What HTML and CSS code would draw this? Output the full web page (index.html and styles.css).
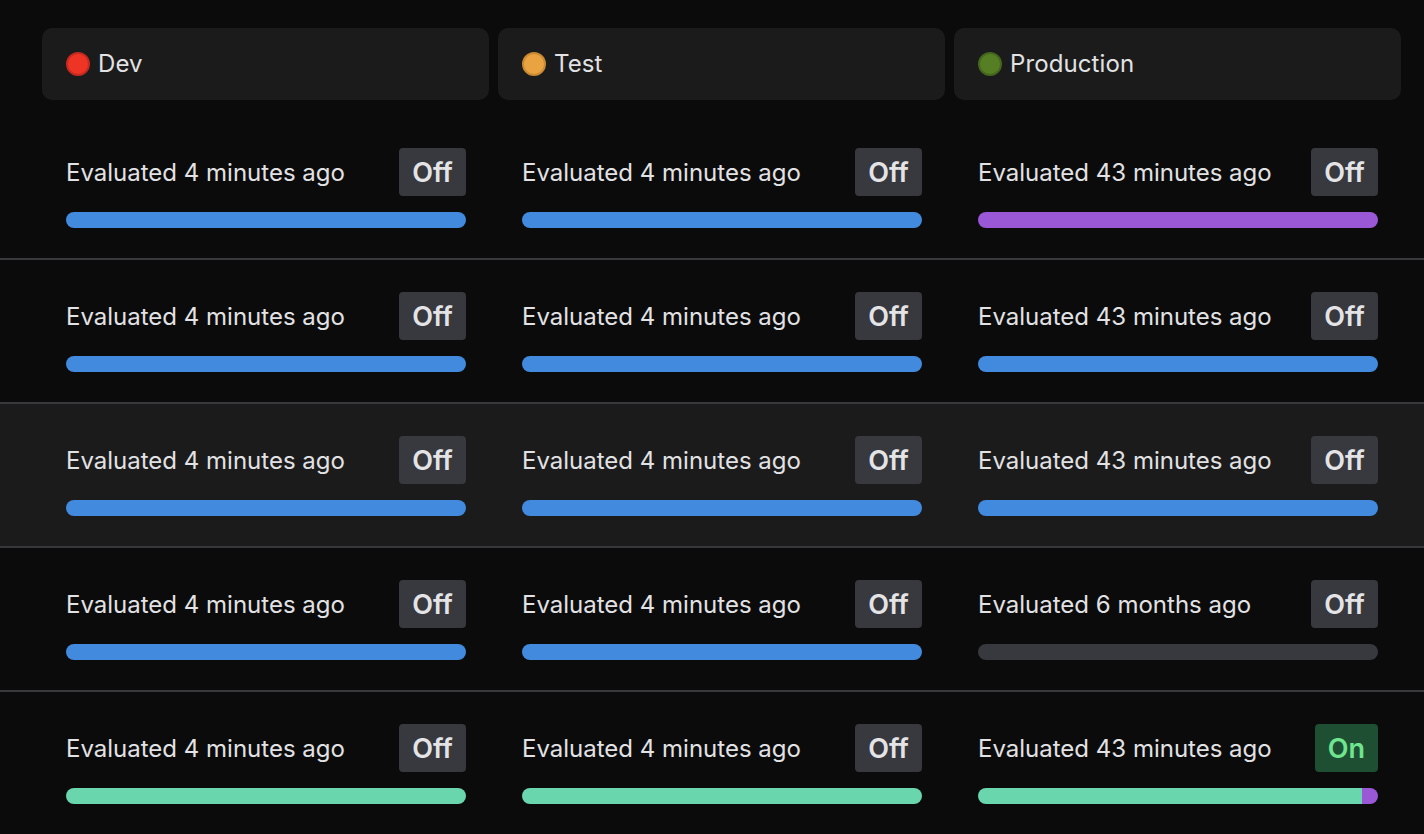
FILE: index.html
```html
<!DOCTYPE html>
<html>
<head>
<meta charset="utf-8">
<link rel="stylesheet" href="styles.css">
</head>
<body>
<div class="page">
  <div class="envs">
    <div class="env"><span class="dot dot-red"></span><span class="env-name">Dev</span></div>
    <div class="env"><span class="dot dot-orange"></span><span class="env-name">Test</span></div>
    <div class="env"><span class="dot dot-green"></span><span class="env-name">Production</span></div>
  </div>

  <div class="row">
    <div class="cells">
      <div class="cell"><div class="cell-top"><span class="eval">Evaluated 4 minutes ago</span><span class="badge">Off</span></div><div class="bar bar-blue"></div></div>
      <div class="cell"><div class="cell-top"><span class="eval">Evaluated 4 minutes ago</span><span class="badge">Off</span></div><div class="bar bar-blue"></div></div>
      <div class="cell"><div class="cell-top"><span class="eval">Evaluated 43 minutes ago</span><span class="badge">Off</span></div><div class="bar bar-purple"></div></div>
    </div>
  </div>

  <div class="row">
    <div class="cells">
      <div class="cell"><div class="cell-top"><span class="eval">Evaluated 4 minutes ago</span><span class="badge">Off</span></div><div class="bar bar-blue"></div></div>
      <div class="cell"><div class="cell-top"><span class="eval">Evaluated 4 minutes ago</span><span class="badge">Off</span></div><div class="bar bar-blue"></div></div>
      <div class="cell"><div class="cell-top"><span class="eval">Evaluated 43 minutes ago</span><span class="badge">Off</span></div><div class="bar bar-blue"></div></div>
    </div>
  </div>

  <div class="row row-hover">
    <div class="cells">
      <div class="cell"><div class="cell-top"><span class="eval">Evaluated 4 minutes ago</span><span class="badge">Off</span></div><div class="bar bar-blue"></div></div>
      <div class="cell"><div class="cell-top"><span class="eval">Evaluated 4 minutes ago</span><span class="badge">Off</span></div><div class="bar bar-blue"></div></div>
      <div class="cell"><div class="cell-top"><span class="eval">Evaluated 43 minutes ago</span><span class="badge">Off</span></div><div class="bar bar-blue"></div></div>
    </div>
  </div>

  <div class="row">
    <div class="cells">
      <div class="cell"><div class="cell-top"><span class="eval">Evaluated 4 minutes ago</span><span class="badge">Off</span></div><div class="bar bar-blue"></div></div>
      <div class="cell"><div class="cell-top"><span class="eval">Evaluated 4 minutes ago</span><span class="badge">Off</span></div><div class="bar bar-blue"></div></div>
      <div class="cell"><div class="cell-top"><span class="eval">Evaluated 6 months ago</span><span class="badge">Off</span></div><div class="bar bar-grey"></div></div>
    </div>
  </div>

  <div class="row row-last">
    <div class="cells">
      <div class="cell"><div class="cell-top"><span class="eval">Evaluated 4 minutes ago</span><span class="badge">Off</span></div><div class="bar bar-green"></div></div>
      <div class="cell"><div class="cell-top"><span class="eval">Evaluated 4 minutes ago</span><span class="badge">Off</span></div><div class="bar bar-green"></div></div>
      <div class="cell"><div class="cell-top"><span class="eval">Evaluated 43 minutes ago</span><span class="badge badge-on">On</span></div><div class="bar bar-split"><span class="seg seg-green" style="width: 96%"></span><span class="seg seg-purple" style="width: 4%"></span></div></div>
    </div>
  </div>
</div>
</body>
</html>
```

FILE: styles.css
```css
* { box-sizing: border-box; }
html, body {
  margin: 0;
  padding: 0;
  background: #0b0b0c;
  font-family: Inter, "Noto Sans", sans-serif;
  color: #e2e2e4;
}
.page {
  width: 1424px;
  height: 834px;
  overflow: hidden;
  padding-top: 28px;
}
.envs {
  display: grid;
  grid-template-columns: repeat(3, 447px);
  column-gap: 9px;
  padding-left: 42px;
  margin-bottom: 16px;
}
.env {
  height: 72px;
  background: #1b1b1c;
  border-radius: 10px;
  display: flex;
  align-items: center;
  padding-left: 24px;
  gap: 8px;
}
.dot {
  width: 24px;
  height: 24px;
  border-radius: 50%;
  border: 2px solid;
  flex: none;
}
.dot-red { background: #ee3424; border-color: #c62a1f; }
.dot-orange { background: #eaa341; border-color: #c98a33; }
.dot-green { background: #567e24; border-color: #45661c; }
.env-name {
  font-size: 24px;
  line-height: 1;
  letter-spacing: 0.1px;
  color: #e2e2e4;
}
.row {
  border-bottom: 2px solid #38383b;
  padding: 32px 0 30px;
}
.row-hover { background: #1b1b1c; }
.row-last { border-bottom: none; }
.cells {
  display: grid;
  grid-template-columns: repeat(3, 447px);
  column-gap: 9px;
  padding-left: 42px;
}
.cell {
  padding: 0 23px 0 24px;
  display: flex;
  flex-direction: column;
  gap: 16px;
}
.cell-top {
  display: flex;
  align-items: center;
  justify-content: space-between;
  height: 48px;
}
.eval {
  font-size: 24px;
  color: #e2e2e4;
}
.badge {
  height: 48px;
  min-width: 67px;
  padding: 0 11px;
  border-radius: 4px;
  background: #38383f;
  color: #e4e4e6;
  font-weight: 600;
  font-size: 27px;
  display: flex;
  align-items: center;
  justify-content: center;
}
.badge-on {
  background: #1f4f33;
  color: #6ee58e;
  min-width: 63px;
}
.bar {
  height: 16px;
  border-radius: 8px;
  overflow: hidden;
  display: flex;
}
.bar-blue { background: #428ade; }
.bar-purple { background: #9a57d6; }
.bar-grey { background: #38383f; }
.bar-green { background: #6ad6ad; }
.seg { height: 100%; display: block; }
.seg-green { background: #6ad6ad; }
.seg-purple { background: #9a57d6; }
```
